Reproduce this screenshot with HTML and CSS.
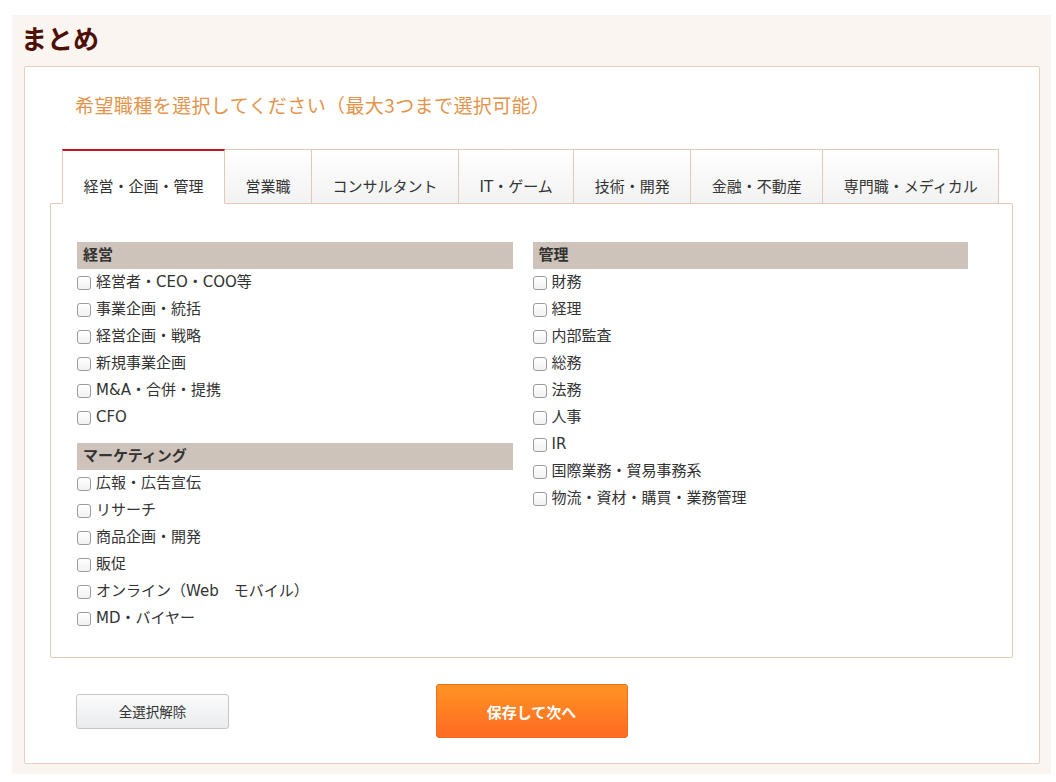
FILE: index.html
```html
<!DOCTYPE html>
<html lang="ja">
<head>
<meta charset="utf-8">
<title>まとめ</title>
<link rel="stylesheet" href="styles.css">
</head>
<body>
<div class="page">
  <h1 class="title">まとめ</h1>
  <div class="card">
    <p class="lead">希望職種を選択してください（最大3つまで選択可能）</p>
    <ul class="tabs">
      <li class="tab active">経営・企画・管理</li>
      <li class="tab">営業職</li>
      <li class="tab">コンサルタント</li>
      <li class="tab">IT・ゲーム</li>
      <li class="tab">技術・開発</li>
      <li class="tab">金融・不動産</li>
      <li class="tab">専門職・メディカル</li>
    </ul>
    <div class="tab-panel">
      <div class="col">
        <section class="group">
          <h2 class="group-head">経営</h2>
          <label class="item"><input type="checkbox" class="cb"><span>経営者・CEO・COO等</span></label>
          <label class="item"><input type="checkbox" class="cb"><span>事業企画・統括</span></label>
          <label class="item"><input type="checkbox" class="cb"><span>経営企画・戦略</span></label>
          <label class="item"><input type="checkbox" class="cb"><span>新規事業企画</span></label>
          <label class="item"><input type="checkbox" class="cb"><span>M&amp;A・合併・提携</span></label>
          <label class="item"><input type="checkbox" class="cb"><span>CFO</span></label>
        </section>
        <section class="group">
          <h2 class="group-head">マーケティング</h2>
          <label class="item"><input type="checkbox" class="cb"><span>広報・広告宣伝</span></label>
          <label class="item"><input type="checkbox" class="cb"><span>リサーチ</span></label>
          <label class="item"><input type="checkbox" class="cb"><span>商品企画・開発</span></label>
          <label class="item"><input type="checkbox" class="cb"><span>販促</span></label>
          <label class="item"><input type="checkbox" class="cb"><span>オンライン（Web　モバイル）</span></label>
          <label class="item"><input type="checkbox" class="cb"><span>MD・バイヤー</span></label>
        </section>
      </div>
      <div class="col">
        <section class="group">
          <h2 class="group-head">管理</h2>
          <label class="item"><input type="checkbox" class="cb"><span>財務</span></label>
          <label class="item"><input type="checkbox" class="cb"><span>経理</span></label>
          <label class="item"><input type="checkbox" class="cb"><span>内部監査</span></label>
          <label class="item"><input type="checkbox" class="cb"><span>総務</span></label>
          <label class="item"><input type="checkbox" class="cb"><span>法務</span></label>
          <label class="item"><input type="checkbox" class="cb"><span>人事</span></label>
          <label class="item"><input type="checkbox" class="cb"><span>IR</span></label>
          <label class="item"><input type="checkbox" class="cb"><span>国際業務・貿易事務系</span></label>
          <label class="item"><input type="checkbox" class="cb"><span>物流・資材・購買・業務管理</span></label>
        </section>
      </div>
    </div>
    <div class="actions">
      <button class="btn-clear" type="button">全選択解除</button>
      <button class="btn-next" type="button">保存して次へ</button>
      <span class="spacer"></span>
    </div>
  </div>
</div>
</body>
</html>
```

FILE: styles.css
```css
* { box-sizing: border-box; }

html, body {
  margin: 0;
  padding: 0;
  background: #ffffff;
}

body {
  font-family: "DejaVu Sans", "Noto Sans CJK JP", sans-serif;
  color: #333333;
  font-size: 15px;
}

.page {
  margin: 15px 5px 0 12px;
  width: 1039px;
  background: #faf5f0;
  padding: 7px 11px 10px 12px;
}

.title {
  margin: 0 0 12px -3px;
  font-family: "Noto Sans CJK JP", sans-serif;
  font-size: 26px;
  line-height: 32px;
  font-weight: 700;
  color: #4e1006;
}

.card {
  background: #ffffff;
  border: 1px solid #e8cebd;
  border-radius: 2px;
  padding: 25px 26px 25px 25px;
}

.lead {
  margin: 0 0 31px 25px;
  font-family: "Noto Sans CJK JP", sans-serif;
  font-size: 19px;
  letter-spacing: 0.4px;
  line-height: 26px;
  color: #e3944a;
}

.tabs {
  list-style: none;
  margin: 0 0 0 12px;
  padding: 0;
  display: flex;
  position: relative;
  z-index: 1;
}

.tab {
  font-size: 15px;
  line-height: 18px;
  padding: 28px 20.5px 7px;
  border: 1px solid #e5c8b6;
  border-left: none;
  background: linear-gradient(#ffffff, #f2f2f2);
  color: #333333;
  margin-bottom: -1px;
  white-space: nowrap;
}

.tab:first-child {
  border-left: 1px solid #e5c8b6;
}

.tab.active {
  background: #ffffff;
  border-top: 2px solid #c8141c;
  border-bottom-color: #ffffff;
  padding-top: 27px;
}

.tab-panel {
  border: 1px solid #e5c8b6;
  border-radius: 0 2px 2px 2px;
  padding: 38px 44px 25px 26px;
  display: grid;
  grid-template-columns: 1fr 1fr;
  column-gap: 20px;
}

.group + .group {
  margin-top: 12px;
}

.group-head {
  margin: 0;
  background: #cec3ba;
  font-size: 15px;
  line-height: 27px;
  height: 27px;
  font-weight: 700;
  padding-left: 6px;
  color: #333333;
}

.item {
  display: flex;
  align-items: center;
  height: 27px;
  font-size: 15px;
  line-height: 18px;
  color: #333333;
  padding-bottom: 1px;
}

.cb {
  -webkit-appearance: none;
  appearance: none;
  width: 14px;
  height: 14px;
  margin: 2px 5px 0 0;
  border: 1px solid #9c9c9c;
  border-radius: 3px;
  background: linear-gradient(#ffffff, #f1f1f1);
  flex: none;
}

.actions {
  margin-top: 26px;
  display: grid;
  grid-template-columns: 1fr auto 1fr;
  align-items: center;
}

.btn-clear {
  justify-self: start;
  margin-left: 26px;
  width: 153px;
  height: 35px;
  border: 1px solid #c6c6c6;
  border-radius: 3px;
  background: linear-gradient(#fbfbfb, #e9ebed);
  font-family: "Noto Sans CJK JP", sans-serif;
  font-size: 13.5px;
  color: #333333;
  padding: 0;
}

.btn-next {
  width: 192px;
  height: 54px;
  border: 1px solid #f26d1f;
  border-radius: 3px;
  background: linear-gradient(#ff9424, #ff6a22);
  font-family: "Noto Sans CJK JP", sans-serif;
  font-size: 15px;
  font-weight: 700;
  color: #ffffff;
  padding: 0;
}
```
